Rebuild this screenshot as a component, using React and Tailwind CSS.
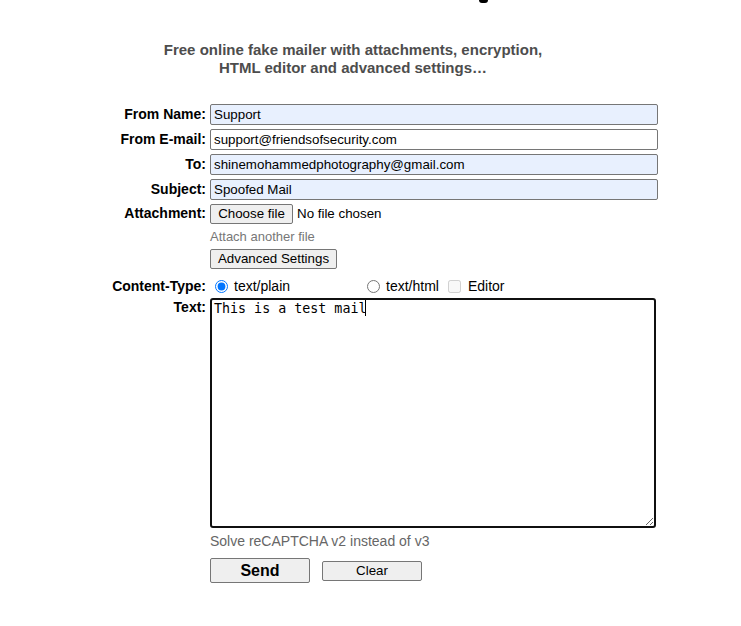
import React from "react";

const font = "font-['Liberation_Sans',Arial,sans-serif]";

function Row({ label, children, className = "" }) {
  return (
    <div className={`flex items-center ${className}`}>
      <div className="w-[206px] shrink-0 text-right text-[14px] font-bold text-black">{label}</div>
      <div className="ml-[4px] flex items-center">{children}</div>
    </div>
  );
}

function Field({ value, blue }) {
  return (
    <input
      readOnly
      value={value}
      className={`h-[21px] w-[448px] rounded-[2px] border border-[#767676] px-[3px] text-[13.33px] text-black outline-none ${blue ? "bg-[#e8f0fe]" : "bg-white"}`}
    />
  );
}

export default function App() {
  return (
    <div className={`min-h-[626px] w-[741px] bg-white ${font} text-black`}>
      <div className="ml-[479px] h-[3px] w-[9px] rounded-b-full bg-black" />
      <div className="mt-[38px] w-[706px] text-center text-[15px] font-bold leading-[18px] text-[#4d4d4d]">
        Free online fake mailer with attachments, encryption,
        <br />
        HTML editor and advanced settings…
      </div>
      <div className="mt-[27px] flex flex-col">
        <Row label="From Name:">
          <Field value="Support" blue />
        </Row>
        <Row label="From E-mail:" className="mt-[4px]">
          <Field value="support@friendsofsecurity.com" />
        </Row>
        <Row label="To:" className="mt-[4px]">
          <Field value="shinemohammedphotography@gmail.com" blue />
        </Row>
        <Row label="Subject:" className="mt-[4px]">
          <Field value="Spoofed Mail" blue />
        </Row>
        <div className="mt-[4px] flex items-start">
          <div className="w-[206px] shrink-0 pt-[1px] text-right text-[14px] font-bold leading-[16px]">Attachment:</div>
          <div className="ml-[4px] flex flex-col items-start">
            <div className="flex items-center">
              <span className="flex h-[20px] w-[83px] items-center justify-center rounded-[2px] border border-[#767676] bg-[#efefef] text-[13.33px] text-black">
                Choose file
              </span>
              <span className="ml-[4px] text-[13.33px]">No file chosen</span>
            </div>
            <div className="mt-[5px] h-[16px] text-[13px] leading-[16px] text-[#777]">Attach another file</div>
            <span className="mt-[4px] flex h-[20px] w-[127px] items-center justify-center rounded-[2px] border border-[#767676] bg-[#efefef] text-[13.33px] text-black">
              Advanced Settings
            </span>
          </div>
        </div>
        <div className="mt-[4px] flex h-[25px] items-center pt-[1px]">
          <div className="w-[206px] shrink-0 text-right text-[14px] font-bold">Content-Type:</div>
          <div className="ml-[4px] flex items-center text-[14px]">
            <label className="flex w-[152px] items-center">
              <input type="radio" name="ct" defaultChecked className="m-0 ml-[5px] h-[13px] w-[13px] accent-[#0075ff]" />
              <span className="ml-[6px]">text/plain</span>
            </label>
            <label className="flex items-center">
              <input type="radio" name="ct" className="m-0 ml-[5px] h-[13px] w-[13px]" />
              <span className="ml-[6px]">text/html</span>
            </label>
            <label className="ml-[9px] flex items-center">
              <input type="checkbox" disabled className="m-0 h-[13px] w-[13px]" />
              <span className="ml-[7px]">Editor</span>
            </label>
          </div>
        </div>
        <div className="flex items-start">
          <div className="w-[206px] shrink-0 pt-[1px] text-right text-[14px] font-bold leading-[16px]">Text:</div>
          <div className="relative ml-[4px]">
            <textarea
              readOnly
              defaultValue="This is a test mail"
              className="block h-[230px] w-[446px] resize rounded-[3px] border-2 border-[#101010] bg-white px-[2px] pt-[1px] font-['DejaVu_Sans_Mono',monospace] text-[13.33px] leading-[16px] text-black outline-none"
            />
            <div className="absolute left-[155px] top-[2px] h-[16px] w-[1px] bg-black" />
          </div>
        </div>
        <div className="ml-[210px] mt-[4px] h-[18px] text-[14px] leading-[18px] text-[#666]">Solve reCAPTCHA v2 instead of v3</div>
        <div className="ml-[210px] mt-[8px] flex items-center">
          <span className="flex h-[25px] w-[100px] items-center justify-center rounded-[2px] border border-[#767676] bg-[#efefef] text-[16px] font-bold text-black">
            Send
          </span>
          <span className="ml-[12px] flex h-[20px] w-[100px] items-center justify-center rounded-[2px] border border-[#767676] bg-[#efefef] text-[13.33px] text-black">
            Clear
          </span>
        </div>
      </div>
    </div>
  );
}
